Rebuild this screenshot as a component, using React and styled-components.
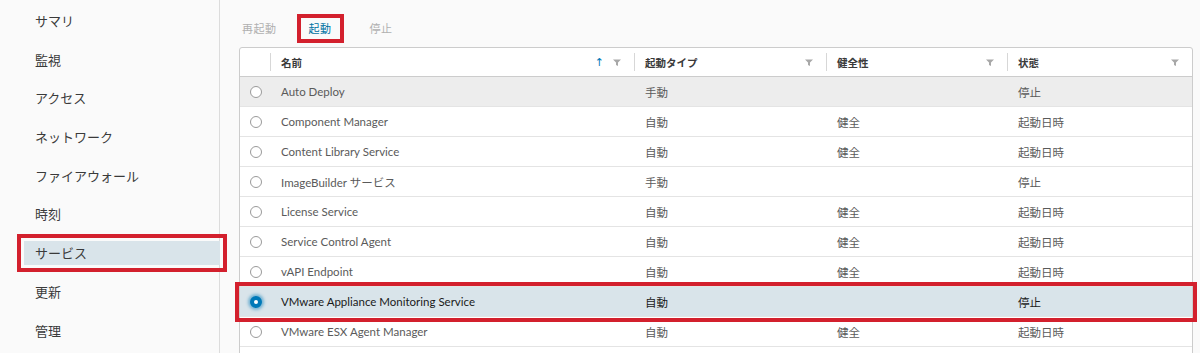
import styled, { createGlobalStyle } from "styled-components"

const GlobalStyle = createGlobalStyle`
  html, body {
    margin: 0;
    padding: 0;
    height: 353px;
    overflow: hidden;
    background: #fafafa;
    font-family: Lato, "Noto Sans CJK JP", sans-serif;
  }
`

const navItems = ['サマリ', '監視', 'アクセス', 'ネットワーク', 'ファイアウォール', '時刻', 'サービス', '更新', '管理']

const services = [
  { name: 'Auto Deploy', type: '手動', health: '', state: '停止', hover: true },
  { name: 'Component Manager', type: '自動', health: '健全', state: '起動日時' },
  { name: 'Content Library Service', type: '自動', health: '健全', state: '起動日時' },
  { name: 'ImageBuilder サービス', type: '手動', health: '', state: '停止' },
  { name: 'License Service', type: '自動', health: '健全', state: '起動日時' },
  { name: 'Service Control Agent', type: '自動', health: '健全', state: '起動日時' },
  { name: 'vAPI Endpoint', type: '自動', health: '健全', state: '起動日時' },
  { name: 'VMware Appliance Monitoring Service', type: '自動', health: '', state: '停止', selected: true },
  { name: 'VMware ESX Agent Manager', type: '自動', health: '健全', state: '起動日時' },
]

const Filter = () => (
  <svg width="8" height="7" viewBox="0 0 8 7">
    <path d="M0 0.5h8L5 3.5v3.5L3 6V3.5z" fill="#a8a8a8" />
  </svg>
)

const App = () => {
  return (
    <>
      <GlobalStyle />
      <Page>
        <Sidebar>
          {navItems.map((item) => (
            <NavItem key={item} active={item === 'サービス'}>{item}</NavItem>
          ))}
        </Sidebar>
        <Main>
          <Toolbar>
            <ToolButton>再起動</ToolButton>
            <ToolButton enabled marked>起動</ToolButton>
            <ToolButton>停止</ToolButton>
          </Toolbar>
          <Grid>
            <HeaderRow>
              <HeadCell />
              <HeadCell sep>
                <span>名前</span>
                <Icons><SortUp>↑</SortUp><Filter /></Icons>
              </HeadCell>
              <HeadCell sep><span>起動タイプ</span><Icons><Filter /></Icons></HeadCell>
              <HeadCell sep><span>健全性</span><Icons><Filter /></Icons></HeadCell>
              <HeadCell sep><span>状態</span><Icons><Filter /></Icons></HeadCell>
            </HeaderRow>
            {services.map((s) => (
              <Row key={s.name} hover={s.hover} selected={s.selected}>
                <Cell><Radio checked={s.selected} /></Cell>
                <Cell>{s.name}</Cell>
                <Cell>{s.type}</Cell>
                <Cell>{s.health}</Cell>
                <Cell>{s.state}</Cell>
              </Row>
            ))}
            <Row />
          </Grid>
        </Main>
      </Page>
    </>
  )
}

const Page = styled.div`
  display: flex;
  height: 353px;
  overflow: hidden;
`

const Sidebar = styled.nav`
  width: 220px;
  flex-shrink: 0;
  border-right: 1px solid #dcdcdc;
  background: #fafafa;
  display: flex;
  flex-direction: column;
  gap: 14.7px;
  padding: 9px 0 0 24px;
  box-sizing: border-box;
  position: relative;
  z-index: 2;
`

const NavItem = styled.div`
  height: 24px;
  line-height: 24px;
  padding-left: 11px;
  font-size: 13px;
  color: #3a3a3a;
  font-family: "Noto Sans CJK JP", sans-serif;
  margin-right: ${(p) => (p.active ? '-1px' : '0')};
  background: ${(p) => (p.active ? '#d9e4ea' : 'transparent')};
  outline: ${(p) => (p.active ? '4px solid #d3202d' : 'none')};
  outline-offset: ${(p) => (p.active ? '3px' : '0')};
`

const Main = styled.main`
  flex: 1;
  padding: 0 7px 0 0;
  background: #fafafa;
`

const Toolbar = styled.div`
  display: flex;
  align-items: center;
  gap: 8px;
  padding: 14px 0 0 10px;
  height: 29px;
  margin-bottom: 4px;
`

const ToolButton = styled.div`
  height: 29px;
  box-sizing: border-box;
  font-size: 11px;
  font-family: "Noto Sans CJK JP", sans-serif;
  color: ${(p) => (p.enabled ? '#0072a3' : '#b0b0b0')};
  letter-spacing: 0.5px;
  border: ${(p) => (p.marked ? '4px solid #d3202d' : 'none')};
  line-height: ${(p) => (p.marked ? '21px' : '29px')};
  padding: ${(p) => (p.marked ? '0 8px' : '0 12px')};
  margin-right: ${(p) => (p.marked ? '6px' : '0')};
`

const Grid = styled.div`
  margin-left: 19px;
  border: 1px solid #cccccc;
  border-radius: 3px;
  background: #fff;
`

const cols = '30px 364px 192px 181px 1fr'

const HeaderRow = styled.div`
  display: grid;
  grid-template-columns: ${cols};
  height: 28px;
  border-bottom: 1px solid #cccccc;
`

const HeadCell = styled.div`
  display: flex;
  align-items: center;
  justify-content: space-between;
  padding: 0 13px 0 11px;
  font-size: 10.5px;
  font-weight: 700;
  color: #3a3a3a;
  font-family: "Noto Sans CJK JP", sans-serif;
  position: relative;

  &::before {
    content: '';
    display: ${(p) => (p.sep ? 'block' : 'none')};
    position: absolute;
    left: 0;
    top: 5px;
    bottom: 5px;
    width: 1px;
    background: #d7d7d7;
  }
`

const Icons = styled.span`
  display: flex;
  align-items: center;
  gap: 9px;
`

const SortUp = styled.span`
  color: #0079b8;
  font-size: 11px;
  font-weight: 400;
  font-family: "DejaVu Sans", sans-serif;
`

const Row = styled.div`
  display: grid;
  grid-template-columns: ${cols};
  height: 29px;
  border-bottom: 1px solid #e4e4e4;
  background: ${(p) => (p.selected ? '#d9e4ea' : p.hover ? '#ededed' : '#fff')};
  color: ${(p) => (p.selected ? '#1a1a1a' : '#5a5a5a')};
  outline: ${(p) => (p.selected ? '4px solid #d3202d' : 'none')};
  outline-offset: ${(p) => (p.selected ? '1px' : '0')};
  position: relative;
  z-index: ${(p) => (p.selected ? 1 : 0)};
`

const Cell = styled.div`
  display: flex;
  align-items: center;
  padding-left: 11px;
  font-size: 11.5px;
  white-space: nowrap;
`

const Radio = styled.span`
  width: 12px;
  height: 12px;
  border-radius: 50%;
  box-sizing: border-box;
  margin-left: -1px;
  border: ${(p) => (p.checked ? '4px solid #0079b8' : '1px solid #9a9a9a')};
  background: #fff;
  box-shadow: ${(p) => (p.checked ? '0 0 3px 2px rgba(0, 121, 184, 0.45)' : 'none')};
`

export default App
